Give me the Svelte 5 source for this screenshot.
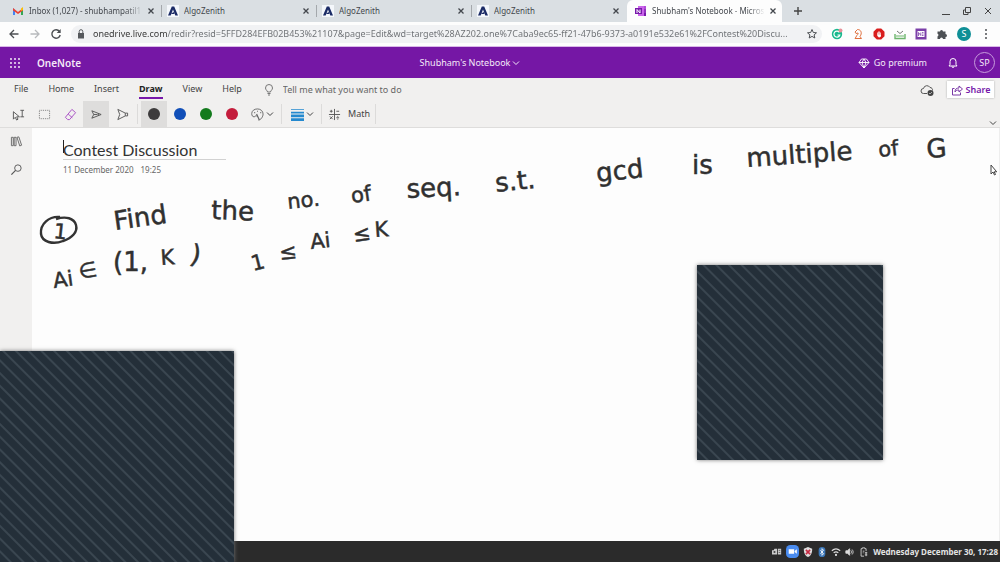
<script lang="ts">
	type Tab = { title: string; kind: 'mail' | 'algo' | 'note' };
	type Word = { text: string; x: number; y: number; turn: number; small?: boolean };

	const tabs: Tab[] = [
		{ title: 'Inbox (1,027) - shubhampatil1', kind: 'mail' },
		{ title: 'AlgoZenith', kind: 'algo' },
		{ title: 'AlgoZenith', kind: 'algo' },
		{ title: 'AlgoZenith', kind: 'algo' },
		{ title: "Shubham's Notebook - Micros", kind: 'note' }
	];

	const menu = ['File', 'Home', 'Insert', 'Draw', 'View', 'Help'];

	const pens = [
		{ name: 'Black', color: '#3d3b3c' },
		{ name: 'Blue', color: '#114fb8' },
		{ name: 'Green', color: '#137a1c' },
		{ name: 'Red', color: '#c41d3c' }
	];

	// words written on the page, placed at their baseline start
	const ink: Word[] = [
		{ text: '1', x: 53, y: 238, turn: 6, small: true },
		{ text: 'Find', x: 115, y: 230, turn: -8 },
		{ text: 'the', x: 211, y: 219, turn: 2 },
		{ text: 'no.', x: 288, y: 209, turn: -6, small: true },
		{ text: 'of', x: 352, y: 203, turn: -8, small: true },
		{ text: 'seq.', x: 407, y: 198, turn: -3 },
		{ text: 's.t.', x: 496, y: 192, turn: -6 },
		{ text: 'gcd', x: 597, y: 182, turn: -6 },
		{ text: 'is', x: 692, y: 174, turn: 0 },
		{ text: 'multiple', x: 747, y: 167, turn: -4 },
		{ text: 'of', x: 879, y: 157, turn: -6, small: true },
		{ text: 'G', x: 927, y: 158, turn: -4 },
		{ text: 'Ai', x: 54, y: 288, turn: -8, small: true },
		{ text: '∈', x: 80, y: 279, turn: -10, small: true },
		{ text: '(1,', x: 113, y: 271, turn: 0 },
		{ text: 'K', x: 161, y: 265, turn: -4, small: true },
		{ text: ')', x: 189, y: 262, turn: 12 },
		{ text: '1', x: 253, y: 271, turn: -14, small: true },
		{ text: '≤', x: 280, y: 260, turn: -6, small: true },
		{ text: 'Ai', x: 311, y: 249, turn: -6, small: true },
		{ text: '≤', x: 354, y: 242, turn: -8, small: true },
		{ text: 'K', x: 375, y: 237, turn: -4, small: true }
	];

	let activeTab = $state(4);
	let activeMenu = $state('Draw');
	let activePen = $state('Black');
	let address = $state(
		'onedrive.live.com/redir?resid=5FFD284EFB02B453%21107&page=Edit&wd=target%28AZ202.one%7Caba9ec65-ff21-47b6-9373-a0191e532e61%2FContest%20Discu...'
	);
</script>

{#snippet chevron()}
	<svg class="chevron" viewBox="0 0 8 8" fill="none" stroke="currentColor"><path d="M1 2.5l3 3 3-3" /></svg>
{/snippet}

{#snippet favicon(kind: Tab['kind'])}
	{#if kind === 'mail'}
		<svg class="favicon" viewBox="0 0 12 12">
			<path d="M1 3v7h2V5" fill="#4285f4" />
			<path d="M9 5v5h2V3" fill="#34a853" />
			<path d="M1 3l5 4 5-4v2.5L6 9 1 5.5z" fill="#ea4335" />
			<path d="M9 3.5L11 2v3L9 6z" fill="#fbbc04" />
		</svg>
	{:else if kind === 'algo'}
		<svg class="favicon" viewBox="0 0 12 12">
			<path d="M0 0h12v12H0z" fill="#f4f7fb" />
			<path d="M4.8 1.5h2.4L11 10.5H8.3L6 4.5 3.7 10.5H1z" fill="#1b2b66" />
			<path d="M3.6 9l3-2 1 2z" fill="#1b2b66" />
		</svg>
	{:else}
		<svg class="favicon" viewBox="0 0 12 12">
			<path d="M3 1h8v10H3z" fill="#ca64ea" />
			<path d="M9 1h2v3H9z" fill="#b04ad8" />
			<path d="M9 4h2v4H9z" fill="#9332bf" />
			<path d="M9 8h2v3H9z" fill="#7719aa" />
			<path d="M0 3h7v6H0z" fill="#7719aa" />
			<path d="M2 8V4.5L5 8V4.5" fill="none" stroke="#fff" />
		</svg>
	{/if}
{/snippet}

<div class="screen">
	<header class="browser">
		<div class="tab-strip">
			{#each tabs as tab, i}
				<div class="tab" class:active={i === activeTab}>
					<button class="tab-main" type="button" onclick={() => (activeTab = i)}>
						{@render favicon(tab.kind)}
						<span class="tab-title" class:fade={tab.kind !== 'algo'}>{tab.title}</span>
					</button>
					<button class="close" type="button" aria-label="Close tab">
						<svg viewBox="0 0 8 8" fill="none" stroke="currentColor" stroke-width="1.3"><path d="M1.5 1.5l5 5M6.5 1.5l-5 5" /></svg>
					</button>
				</div>
			{/each}
			<button class="new-tab" type="button" aria-label="New tab">
				<svg viewBox="0 0 10 10" fill="none" stroke="currentColor" stroke-width="1.4"><path d="M5 1v8M1 5h8" /></svg>
			</button>
			<div class="window-controls">
				<button type="button" aria-label="Minimise"><svg viewBox="0 0 10 10" fill="none" stroke="currentColor"><path d="M1 8.5h8" /></svg></button>
				<button type="button" aria-label="Restore"><svg viewBox="0 0 10 10" fill="none" stroke="currentColor"><path d="M3.5 1.5h5v5h-5zM3.5 4H1.5v4.500H6V6.500" /></svg></button>
				<button type="button" aria-label="Close"><svg viewBox="0 0 10 10" fill="none" stroke="currentColor"><path d="M2 2l6 6M8 2l-6 6" /></svg></button>
			</div>
		</div>

		<div class="address-row">
			<button type="button" aria-label="Back"><svg viewBox="0 0 12 12" fill="none" stroke="#4c4f53" stroke-width="1.3"><path d="M10.5 6H2M6 2L2 6l4 4" /></svg></button>
			<button type="button" aria-label="Forward"><svg viewBox="0 0 12 12" fill="none" stroke="#b8babd" stroke-width="1.3"><path d="M1.5 6H10M6 2l4 4-4 4" /></svg></button>
			<button type="button" aria-label="Reload"><svg viewBox="0 0 12 12" fill="none" stroke="#4c4f53" stroke-width="1.4"><path d="M9.5 3.5A4.2 4.2 0 1 0 10.2 7" /><path d="M10.7 1v4h-4z" fill="#4c4f53" stroke="none" /></svg></button>
			<div class="omnibox">
				<svg viewBox="0 0 12 12"><path d="M3 5h6v5.500H3z" fill="#55585c" /><path d="M4.2 5V3.500a1.800 1.800 0 0 1 3.600 0V5" fill="none" stroke="#55585c" /></svg>
				<input aria-label="Address" bind:value={address} spellcheck="false" />
				<button type="button" aria-label="Bookmark"><svg viewBox="0 0 12 12" fill="none" stroke="#4c4f53"><path d="M6 1.500l1.300 3 3.200.3-2.400 2.100.7 3.100L6 8.400 3.200 10l.7-3.100L1.500 4.800l3.200-.3z" /></svg></button>
			</div>
			<div class="extensions">
				<button type="button" aria-label="Grammarly"><svg viewBox="0 0 12 12"><circle cx="6" cy="6" r="5.2" fill="#18b88d" /><path d="M8.3 4.3A3 3 0 1 0 8.8 7H6.5" fill="none" stroke="#fff" stroke-width="1.2" /><circle cx="9.5" cy="2.5" r="2" fill="#e8909a" /></svg></button>
				<button type="button" aria-label="Chess"><svg viewBox="0 0 12 12" fill="none" stroke="#e0703e"><path d="M3 10.5h6.5L8 8.500C10.500 5 9 1.500 5.500 1.500L3 4l1 1.500 2-.5c1 1-1.500 2-2 4z" /></svg></button>
				<button type="button" aria-label="Ad blocker"><svg viewBox="0 0 12 12"><path d="M3.8.5h4.400l3.300 3.300v4.400l-3.300 3.300H3.800L.5 8.200V3.800z" fill="#d91e1e" /><path d="M4.500 7V4.500M5.500 7V3.500M6.500 7V3.500M7.500 8V4.500M4.500 7h3v1.500L7 9H5.500z" fill="#fff" stroke="#fff" stroke-width=".7" /></svg></button>
				<button type="button" aria-label="Downloads"><svg viewBox="0 0 12 12" fill="none"><path d="M1 6v4.500h10V6" stroke="#6cb56c" stroke-width="1.4" /><path d="M2 8h8" stroke="#6cb56c" /><path d="M3 3l3 2.500L9 3" stroke="#777" /></svg></button>
				<button type="button" aria-label="OneNote clipper"><svg viewBox="0 0 12 12"><path d="M.5.5h11v11H.5z" fill="#7b3fa8" /><path d="M2.500 3h7v6h-7z" fill="#fff" /><path d="M3.500 8V4.500L5.800 7.500V4.500M7 4.500h1.500M7 6h1.500M7 7.500h1.500" fill="none" stroke="#7b3fa8" stroke-width=".8" /></svg></button>
				<button type="button" aria-label="Extensions"><svg viewBox="0 0 12 12"><path d="M1.500 3.500H4a1.500 1.500 0 1 1 3 0h2.500V6a1.500 1.500 0 1 1 0 3v2H7a1.500 1.500 0 0 0-3 0H1.500V8.500a1.500 1.500 0 0 0 0-2.800z" fill="#4d5054" /></svg></button>
				<button class="profile" type="button">S</button>
				<button type="button" aria-label="Browser menu"><svg viewBox="0 0 12 12" fill="#4c4f53"><circle cx="6" cy="2" r="1" /><circle cx="6" cy="6" r="1" /><circle cx="6" cy="10" r="1" /></svg></button>
			</div>
		</div>
	</header>

	<div class="app-bar">
		<div class="brand">
			<button type="button" aria-label="App launcher">
				<svg viewBox="0 0 12 12" fill="#fff">
					{#each [2, 6, 10] as y}
						{#each [2, 6, 10] as x}
							<circle cx={x} cy={y} r=".9" />
						{/each}
					{/each}
				</svg>
			</button>
			<strong>OneNote</strong>
		</div>
		<button class="notebook" type="button">Shubham's Notebook {@render chevron()}</button>
		<div class="account">
			<button class="premium" type="button">
				<svg viewBox="0 0 12 12" fill="none" stroke="#fff" stroke-width=".9"><path d="M3.500 2h5L11 5.500 6 11 1 5.500zM1 5.500h10M6 2L4 5.500l2 5.500 2-5.500-2-3.500" /></svg>
				Go premium
			</button>
			<button type="button" aria-label="Notifications"><svg viewBox="0 0 12 12" fill="none" stroke="#fff"><path d="M2 9h8L9 7.500V4.500a3 3 0 0 0-6 0v3zM5 9.500a1 1 0 0 0 2 0" /></svg></button>
			<button class="avatar" type="button">SP</button>
		</div>
	</div>

	<section class="ribbon">
		<div class="menu-row">
			<nav>
				{#each menu as item}
					<button type="button" class:current={item === activeMenu} onclick={() => (activeMenu = item)}>{item}</button>
				{/each}
			</nav>
			<label class="tell-me">
				<svg viewBox="0 0 12 12" fill="none" stroke="#777"><path d="M4.500 8C4.500 6.500 2.500 6 2.500 4a3.500 3.500 0 0 1 7 0c0 2-2 2.500-2 4zM4.500 9.500h3M5 11h2" /></svg>
				<input placeholder="Tell me what you want to do" aria-label="Tell me what you want to do" />
			</label>
			<svg class="saved" viewBox="0 0 14 14" fill="none" stroke="#555"><path d="M7 10.500H3.500a2.500 2.500 0 0 1 0-5 3.500 3.500 0 0 1 6.500-1 2.500 2.500 0 0 1 2.500 3" /><circle cx="10.500" cy="10" r="3" fill="#444" stroke="none" /><path d="M9 10l1 1 2-2" stroke="#ddd" stroke-width=".7" /></svg>
			<button class="share" type="button">
				<svg viewBox="0 0 12 12" fill="none" stroke="#7b3aa6"><path d="M3.500 4.500h-2V11h8V8.500M4 8c0-3 1.500-4 4-4V2l3.500 3L8 8V6C6 6 5 6.500 4 8z" /></svg>
				Share
			</button>
		</div>

		<div class="tool-row">
			<button class="tool" type="button" aria-label="Select text"><svg viewBox="0 0 14 14" fill="none" stroke="#555"><path d="M1.500 4v8l2-2 1.500 3 1.500-1-1.500-2.500h3zM9 2.500h4M9 9.500h4M11 2.500v7" /></svg></button>
			<button class="tool" type="button" aria-label="Lasso"><svg viewBox="0 0 14 14" fill="none" stroke="#777" stroke-dasharray="1 1"><path d="M1.500 2.500h11v9h-11z" /></svg></button>
			<button class="tool" type="button" aria-label="Eraser"><svg viewBox="0 0 14 14" fill="none" stroke="#a64cc4"><path d="M8.500 1.500l4 3.500-6.500 7.500H4L1.500 10zM4.500 6.500l4.500 4" /></svg></button>
			<button class="tool on" type="button" aria-label="Pen"><svg viewBox="0 0 14 14" fill="none" stroke="#555"><path d="M2 3l10 4L2 11l2-4zM4 7h4M9 5.500v3" /></svg></button>
			<button class="tool" type="button" aria-label="Highlighter"><svg viewBox="0 0 14 14" fill="none" stroke="#555"><path d="M2 1.500l8 4h2.500v3H10l-8 4L4 7zM10 5.500v3" /></svg></button>
			<i class="divider"></i>
			{#each pens as pen}
				<button class="tool" class:on={pen.name === activePen} type="button" aria-label="{pen.name} pen" onclick={() => (activePen = pen.name)}>
					<span class="dot" style="background: {pen.color}"></span>
				</button>
			{/each}
			<button class="tool wide" type="button" aria-label="More colours">
				<svg viewBox="0 0 14 14" fill="none" stroke="#666"><path d="M7 9c-1-1-2.500-.5-3.500.5C1.500 9.500.8 8 .8 6 .8 3 3.500 1 7 1s6 2.500 6 5.500S10.500 13 8 13" /><path d="M3.500 5h1M6.500 3.500h1M10 5h1M6 6.500l3 6.500" stroke-width="1.3" /></svg>
				{@render chevron()}
			</button>
			<i class="divider"></i>
			<button class="tool wide" type="button" aria-label="Line thickness">
				<svg viewBox="0 0 14 14" fill="#2489cf"><path d="M0 1h14v1H0zM0 4h14v2H0zM0 7h14v3H0zM0 11h14v3H0z" /></svg>
				{@render chevron()}
			</button>
			<i class="divider"></i>
			<button class="tool math" type="button">
				<svg viewBox="0 0 14 14" fill="none" stroke="#555"><path d="M7 1v12M1 7h12M2 3.500h3M3.500 2v3M9 3.500h3M2 9l3 3M5 9l-3 3M9 10.500h3M10.500 8.500v1M10.500 11.500v1" /></svg>
				Math
			</button>
			<i class="divider"></i>
			<button class="collapse" type="button" aria-label="Collapse ribbon">{@render chevron()}</button>
		</div>
	</section>

	<main>
		<aside>
			<button type="button" aria-label="Notebooks"><svg viewBox="0 0 14 14" fill="none" stroke="#666"><path d="M1.500 2.500h2v9h-2zM4.500 2.500h2v9h-2zM7.500 2.500l2-.5 3 9-2 .8z" /></svg></button>
			<button type="button" aria-label="Search"><svg viewBox="0 0 14 14" fill="none" stroke="#555"><circle cx="8.500" cy="5.500" r="3.500" /><path d="M6 8l-4.500 4.500" stroke-width="1.3" /></svg></button>
		</aside>
		<article>
			<h1>Contest Discussion</h1>
			<p><span>11 December 2020</span><span>19:25</span></p>
		</article>
	</main>

	<footer>
		<svg viewBox="0 0 12 12" fill="#ccc"><path d="M0 4h2l1-2h3v7H0zM7 2h4v7H7z" /><circle cx="3" cy="6" r="1.300" fill="#444" /><path d="M8 4h2M8 6.500h2" stroke="#555" /></svg>
		<svg class="zoom-app" viewBox="0 0 12 12"><rect width="12" height="12" rx="4" fill="#4a8cf0" /><path d="M2.500 4h5v4h-5zM8 5.500L10 4v4L8 6.500z" fill="#fff" /></svg>
		<svg viewBox="0 0 12 12"><path d="M6 0l5 2c0 5-1 8-5 10C2 10 1 7 1 2z" fill="#ddd" /><path d="M3.500 3.500l5 5M8.500 3.500l-5 5" stroke="#c62b43" stroke-width="2" /></svg>
		<svg viewBox="0 0 12 12"><rect x="2" width="8" height="12" rx="4" fill="#3c77b8" /><path d="M4 4l4 4-2 2V2l2 2-4 4" fill="none" stroke="#fff" /></svg>
		<svg viewBox="0 0 12 12" fill="none" stroke="#ddd" stroke-width="1.4"><path d="M1 4.500c3-2.700 7-2.700 10 0M3.200 7c1.700-1.500 3.900-1.500 5.600 0" /><circle cx="6" cy="9.500" r=".6" fill="#ddd" /></svg>
		<svg viewBox="0 0 12 12" fill="none" stroke="#ddd"><path d="M1 4.500h2L5.500 2v8L3 7.500H1z" fill="#ddd" /><path d="M7 4c1 1.300 1 2.700 0 4M8.500 3c1.700 2 1.700 4 0 6" /></svg>
		<svg viewBox="0 0 12 12" fill="none" stroke="#ddd"><path d="M8.500 5V2H7V1H4v1H2.500v9H6M4.500 5h2M4.500 7h1" /><path d="M7 7h3M7 9.500h3M8.500 6v5" /></svg>
		<time>Wednesday December 30, 17:28</time>
	</footer>

	<!-- pen layer over the page -->
	<svg class="ink" viewBox="0 0 1000 562">
		{#each ink as word}
			<text class:small={word.small} transform="translate({word.x} {word.y}) rotate({word.turn})">{word.text}</text>
		{/each}
		<path d="M60 217C49 216 40 224 41 234C42 242 53 245 63 241C72 238 78 232 76 225C74 218 66 216 56 219" fill="none" stroke="#333" stroke-width="2.4" />
		<path d="M63.500 140v13" stroke="#222" />
		<path d="M991 165v9l2-2 1.500 3 1-.5-1.300-2.700h2.500z" fill="#fff" stroke="#444" />
	</svg>

	<div class="panel left"></div>
	<div class="panel right"></div>
</div>

<style>
	:global(body) {
		background: #fdfdfd;
	}

	.screen {
		position: relative;
		display: flex;
		flex-direction: column;
		min-height: 100vh;
		overflow: hidden;
		font: 9px/16px 'Noto Sans', 'Open Sans', sans-serif;
		color: #444;
	}

	button,
	input {
		margin: 0;
		padding: 0;
		border: 0;
		background: none;
		font: inherit;
		color: inherit;
		outline: 0;
	}

	button {
		display: flex;
		align-items: center;
		justify-content: center;
		flex: none;
		white-space: nowrap;
	}

	svg {
		display: block;
		flex: none;
		width: 12px;
		height: 12px;
	}

	.chevron {
		width: 8px;
		height: 8px;
	}

	.tab-strip {
		display: flex;
		height: 22px;
		padding-left: 7px;
		background: #dadfe3;
	}

	.tab {
		display: flex;
		align-items: center;
		flex: 0 1 155px;
		min-width: 0;
		padding: 0 7px 0 5px;
		box-sizing: border-box;
		font-size: 8px;
		color: #43474d;
	}

	.tab:not(.active) {
		background: linear-gradient(#a4a8ac, #a4a8ac) right center / 1px 12px no-repeat;
	}

	.tab:nth-child(4) {
		background: none;
	}

	.tab.active {
		background: #fdfdfd;
		border-radius: 6px 6px 0 0;
		padding: 0 5px 0 8px;
	}

	.tab-main {
		flex: 1;
		min-width: 0;
		gap: 5px;
		justify-content: flex-start;
		overflow: hidden;
	}

	.tab-title {
		flex: 1;
		min-width: 0;
		overflow: hidden;
		text-align: left;
	}

	.fade {
		mask-image: linear-gradient(to right, #000 85%, transparent);
	}

	.close {
		margin-left: 4px;
	}

	.close svg {
		width: 8px;
		height: 8px;
	}

	.new-tab {
		margin-left: 11px;
	}

	.new-tab svg,
	.window-controls svg {
		width: 10px;
		height: 10px;
	}

	.window-controls {
		display: flex;
		gap: 11px;
		margin-left: auto;
		padding-right: 7px;
	}

	.address-row {
		display: flex;
		align-items: center;
		gap: 9px;
		height: 24px;
		padding: 0 8px;
		background: #fdfdfd;
		border-bottom: 1px solid #d9b8e8;
	}

	.omnibox {
		display: flex;
		align-items: center;
		flex: 1;
		min-width: 0;
		gap: 6px;
		height: 18px;
		padding: 0 4px;
		border-radius: 9px;
		background: #f1f2f4;
	}

	.omnibox input {
		flex: 1;
		min-width: 0;
		color: transparent;
		background: linear-gradient(to right, #333 74px, #6b6e72 74px);
		background-clip: text;
	}

	.extensions {
		display: flex;
		align-items: center;
		gap: 9px;
	}

	.profile {
		width: 14px;
		height: 14px;
		border-radius: 50%;
		background: #0f8f96;
		color: #fff;
	}

	.app-bar {
		display: grid;
		grid-template-columns: 1fr auto 1fr;
		align-items: center;
		height: 31px;
		padding: 0 5px 0 9px;
		background: #7517a5;
		color: #f4e9f8;
	}

	.brand {
		display: flex;
		align-items: center;
		gap: 16px;
	}

	.brand strong {
		font-size: 10px;
		font-weight: 600;
	}

	.notebook {
		gap: 2px;
		margin-right: 64px;
	}

	.account {
		display: flex;
		align-items: center;
		justify-content: flex-end;
		gap: 20px;
	}

	.premium {
		gap: 4px;
	}

	.avatar {
		width: 21px;
		height: 21px;
		margin-left: -5px;
		box-sizing: border-box;
		border: 1px solid #c79bdc;
		border-radius: 50%;
	}

	.ribbon {
		background: #f1f0ef;
		border-bottom: 1px solid #dedddc;
	}

	.menu-row {
		display: flex;
		align-items: center;
		height: 23px;
		padding-right: 6px;
	}

	nav {
		display: flex;
		gap: 20px;
		padding-left: 14px;
	}

	nav button {
		height: 18px;
		border-bottom: 2px solid transparent;
	}

	nav .current {
		border-color: #7719aa;
		font-weight: 700;
		color: #222;
	}

	.tell-me {
		display: flex;
		align-items: center;
		gap: 8px;
		flex: 1;
		margin-left: 21px;
	}

	.tell-me input {
		width: 150px;
	}

	.tell-me input::placeholder {
		color: #666;
		opacity: 1;
	}

	.saved {
		width: 14px;
		height: 14px;
		margin-right: 13px;
	}

	.share {
		gap: 3px;
		width: 47px;
		height: 17px;
		background: #fff;
		box-shadow: 0 0 2px #aaa;
		color: #7719aa;
		font-weight: 600;
	}

	.tool-row {
		display: flex;
		align-items: center;
		height: 26px;
		padding: 0 3px 0 5px;
	}

	.tool {
		width: 26px;
		height: 26px;
	}

	.tool svg {
		width: 13px;
		height: 13px;
	}

	.tool.on {
		background: #dedddc;
	}

	.tool .chevron,
	.collapse .chevron {
		width: 8px;
		height: 8px;
	}

	.tool.wide {
		width: 34px;
		gap: 2px;
	}

	.tool.math {
		width: 48px;
		gap: 7px;
	}

	.divider {
		width: 1px;
		height: 20px;
		margin: 0 3px 0 2px;
		background: #dcdbda;
	}

	.dot {
		width: 12px;
		height: 12px;
		border-radius: 50%;
	}

	.collapse {
		margin-left: auto;
		align-self: flex-end;
	}

	main {
		display: flex;
		flex: 1;
	}

	aside {
		display: flex;
		flex-direction: column;
		align-items: center;
		gap: 15px;
		width: 32px;
		padding-top: 7px;
		box-sizing: border-box;
		background: #f1f0ef;
	}

	aside svg {
		width: 13px;
		height: 13px;
	}

	article {
		flex: 1;
		padding: 13px 31px;
		border-right: 1px solid #eee;
	}

	h1 {
		width: 163px;
		margin: 0;
		border-bottom: 1px solid #d2d2d2;
		font: 16px/18px Lato, 'Open Sans', sans-serif;
		color: #333;
	}

	p {
		display: flex;
		gap: 7px;
		margin: 2px 0 0;
		font-size: 8px;
		color: #666;
	}

	footer {
		display: flex;
		align-items: center;
		justify-content: flex-end;
		gap: 4px;
		height: 21px;
		padding-right: 2px;
		background: #2b2b2b;
		color: #e4e4e4;
	}

	footer svg {
		width: 10px;
		height: 10px;
	}

	footer .zoom-app {
		width: 13px;
		height: 13px;
	}

	time {
		font-size: 8px;
		font-weight: 700;
	}

	.ink {
		position: absolute;
		top: 0;
		left: 0;
		width: 1000px;
		height: 562px;
		pointer-events: none;
	}

	.ink text {
		font: 26px 'DejaVu Sans', sans-serif;
		fill: #303030;
		stroke: #303030;
		stroke-width: 0.5;
	}

	.ink .small {
		font-size: 21px;
	}

	.panel {
		position: absolute;
		background: repeating-linear-gradient(45deg, #242f39 0 6px, #3a4650 7px, #3a4650 8px, #242f39 9px);
		box-shadow: 0 0 4px #777;
	}

	.left {
		left: 0;
		top: 351px;
		bottom: 0;
		width: 234px;
	}

	.right {
		left: 697px;
		top: 265px;
		width: 186px;
		height: 195px;
	}
</style>
